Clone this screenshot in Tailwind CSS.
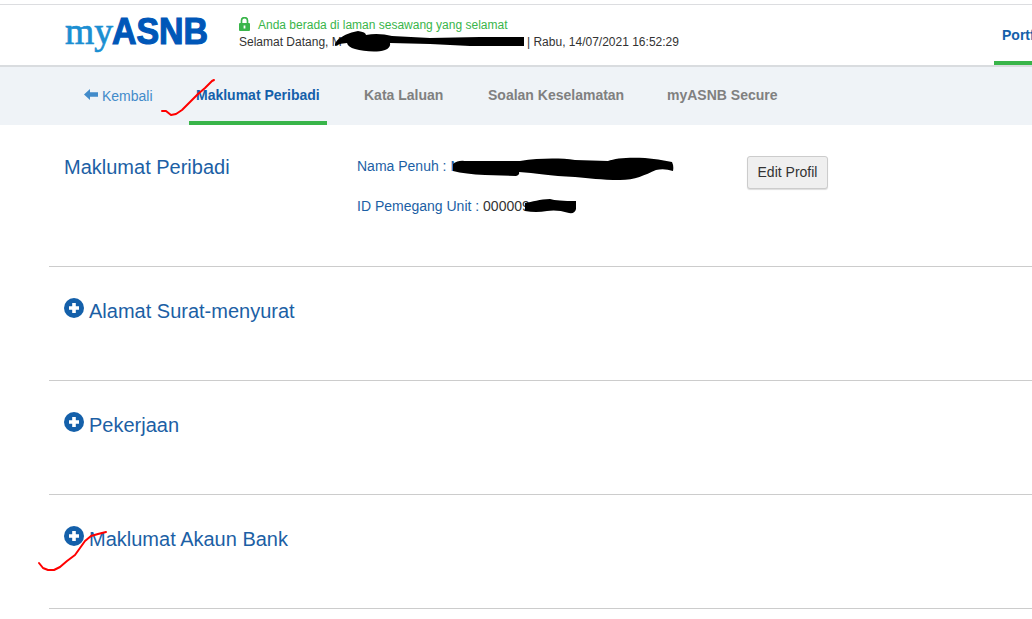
<!DOCTYPE html>
<html lang="ms">
<head>
  <meta charset="UTF-8" />
  <meta name="viewport" content="width=device-width, initial-scale=1" />
  <title>myASNB - Maklumat Peribadi</title>
  <script src="https://cdn.jsdelivr.net/npm/@tailwindcss/browser@4"></script>
</head>
<body class="relative h-[619px] overflow-hidden bg-white font-['Liberation_Sans',Arial,sans-serif] text-sm text-[#333]">
  <!-- Header -->
  <header class="mt-1 flex h-[63px] border-t border-b-2 border-t-[#dcdde0] border-b-[#d9dcdf] pl-[64px]">
    <svg class="mt-1 h-[52px] w-[150px] shrink-0" viewBox="0 0 150 52">
      <text x="1" y="35" font-family="Liberation Serif, serif" font-size="38" textLength="48" lengthAdjust="spacingAndGlyphs" fill="#1b8fd2" stroke="#1b8fd2" stroke-width=".7">my</text>
      <text x="48" y="35" font-family="Liberation Sans, sans-serif" font-weight="bold" font-size="36" textLength="96" lengthAdjust="spacingAndGlyphs" fill="#0057b8" stroke="#0057b8" stroke-width="1.2">ASNB</text>
    </svg>
    <div class="ml-[25px] pt-3 text-xs leading-[17px] whitespace-nowrap">
      <div class="flex text-[#39b54a]">
        <svg class="mr-2 h-[14px] w-[11px]" viewBox="0 0 11 14">
          <path d="M2.5 7V3.6a3 3 0 0 1 6 0V7" fill="none" stroke="#39b54a" stroke-width="1.7" />
          <rect y="6" width="11" height="8" rx="1" fill="#39b54a" />
          <path d="M5.5 8.5v3" stroke="#fff" stroke-width="1.8" />
        </svg>
        <span>Anda berada di laman sesawang yang selamat</span>
      </div>
      <div class="flex">
        <span class="w-[288px]">Selamat Datang, M</span>
        <span>| Rabu, 14/07/2021 16:52:29</span>
      </div>
    </div>
    <a href="#" class="ml-auto h-[60px] w-[38px] shrink-0 overflow-hidden border-b-4 border-[#39b54a] pt-5 pl-2 font-bold whitespace-nowrap text-[#1460aa]">Portfolio</a>
  </header>

  <!-- Tabs -->
  <nav class="flex h-[58px] bg-[#eff3f7] pl-[84px] font-bold whitespace-nowrap text-[#808080]">
    <a href="#" class="flex w-[105px] pt-[19px] font-normal text-[#428bca]">
      <svg class="mt-[3px] mr-1 h-[11px] w-[14px]" viewBox="0 0 14 11">
        <path d="M0 5.5 6 0v3.3h8v4.4H6V11z" fill="#428bca" />
      </svg>
      Kembali
    </a>
    <a href="#" class="w-[138px] border-b-4 border-[#39b54a] pt-[18px] pl-[7px] text-[#1460aa]">Maklumat Peribadi</a>
    <a href="#" class="ml-[37px] w-[124px] pt-[18px]">Kata Laluan</a>
    <a href="#" class="w-[179px] pt-[18px]">Soalan Keselamatan</a>
    <a href="#" class="pt-[18px]">myASNB Secure</a>
  </nav>

  <!-- Profile sections -->
  <main class="pl-[49px] text-[#1c5fa5]">
    <section class="flex h-[142px] border-b border-[#ccc] pl-[15px]">
      <h2 class="w-[293px] pt-7 text-xl">Maklumat Peribadi</h2>
      <div class="w-[390px] pt-[31px] leading-5">
        <p>Nama Penuh : <span>M</span></p>
        <p class="mt-5">ID Pemegang Unit : <span class="text-[#333]">000009</span></p>
      </div>
      <button class="mt-[31px] h-[33px] w-[81px] rounded-[3px] border border-[#ccc] bg-[#efefef] pb-0.5 text-[#333] shadow-[0_1px_1px_#ddd]">Edit Profil</button>
    </section>
    <section class="flex h-[114px] border-b border-[#ccc] pl-[15px]">
      <svg class="mt-[31px] mr-[5px] h-5 w-5" viewBox="0 0 20 20">
        <circle cx="10" cy="10" r="10" fill="#1460aa" />
        <path d="M10 5v10M5 10h10" stroke="#fff" stroke-width="3.6" />
      </svg>
      <h2 class="pt-[30px] text-xl">Alamat Surat-menyurat</h2>
    </section>
    <section class="flex h-[114px] border-b border-[#ccc] pl-[15px]">
      <svg class="mt-[31px] mr-[5px] h-5 w-5" viewBox="0 0 20 20">
        <circle cx="10" cy="10" r="10" fill="#1460aa" />
        <path d="M10 5v10M5 10h10" stroke="#fff" stroke-width="3.6" />
      </svg>
      <h2 class="pt-[30px] text-xl">Pekerjaan</h2>
    </section>
    <section class="flex h-[114px] border-b border-[#ccc] pl-[15px]">
      <svg class="mt-[31px] mr-[5px] h-5 w-5" viewBox="0 0 20 20">
        <circle cx="10" cy="10" r="10" fill="#1460aa" />
        <path d="M10 5v10M5 10h10" stroke="#fff" stroke-width="3.6" />
      </svg>
      <h2 class="pt-[30px] text-xl">Maklumat Akaun Bank</h2>
    </section>
  </main>

  <!-- Pen marks: hidden details and ticks -->
  <svg class="pointer-events-none absolute top-0 left-0 h-[619px] w-[1032px]" viewBox="0 0 1032 619">
    <path d="M335 46C334 40 346 33 358 31Q366 32 366 35C375 33 384 34 392 36L430 38 480 37 524 37V46L470 46 430 44 390 43Q391 48 385 50C376 53 363 51 355 49Q348 47 347 43Q341 43 335 46z" />
    <path d="M453 164Q458 160 465 161L520 161C540 158 560 158 575 160L608 161C615 158 630 157 645 158Q658 159 672 162Q674 166 673 171Q664 168 656 170C645 175 635 180 620 180C600 180 590 178 575 177C550 176 535 173 519 172Q520 175 516 176L485 175Q465 174 453 171z" />
    <path d="M525 203C532 202 540 199 550 199Q557 201 576 201V209Q575 214 569 213C560 210 552 210 547 211Q536 213 525 211z" />
    <g fill="none" stroke="#f00" stroke-width="2" stroke-linejoin="round" stroke-linecap="round">
      <path d="M162 111h4l5 4 5-1 6-4 8-8 8-8 7-6 7-7 2-1" />
      <path d="m39 563 4 5 5 2h6l6-3 7-6 8-6 5-7 5-7 6-5 7-2 8-2" />
    </g>
  </svg>
</body>
</html>
